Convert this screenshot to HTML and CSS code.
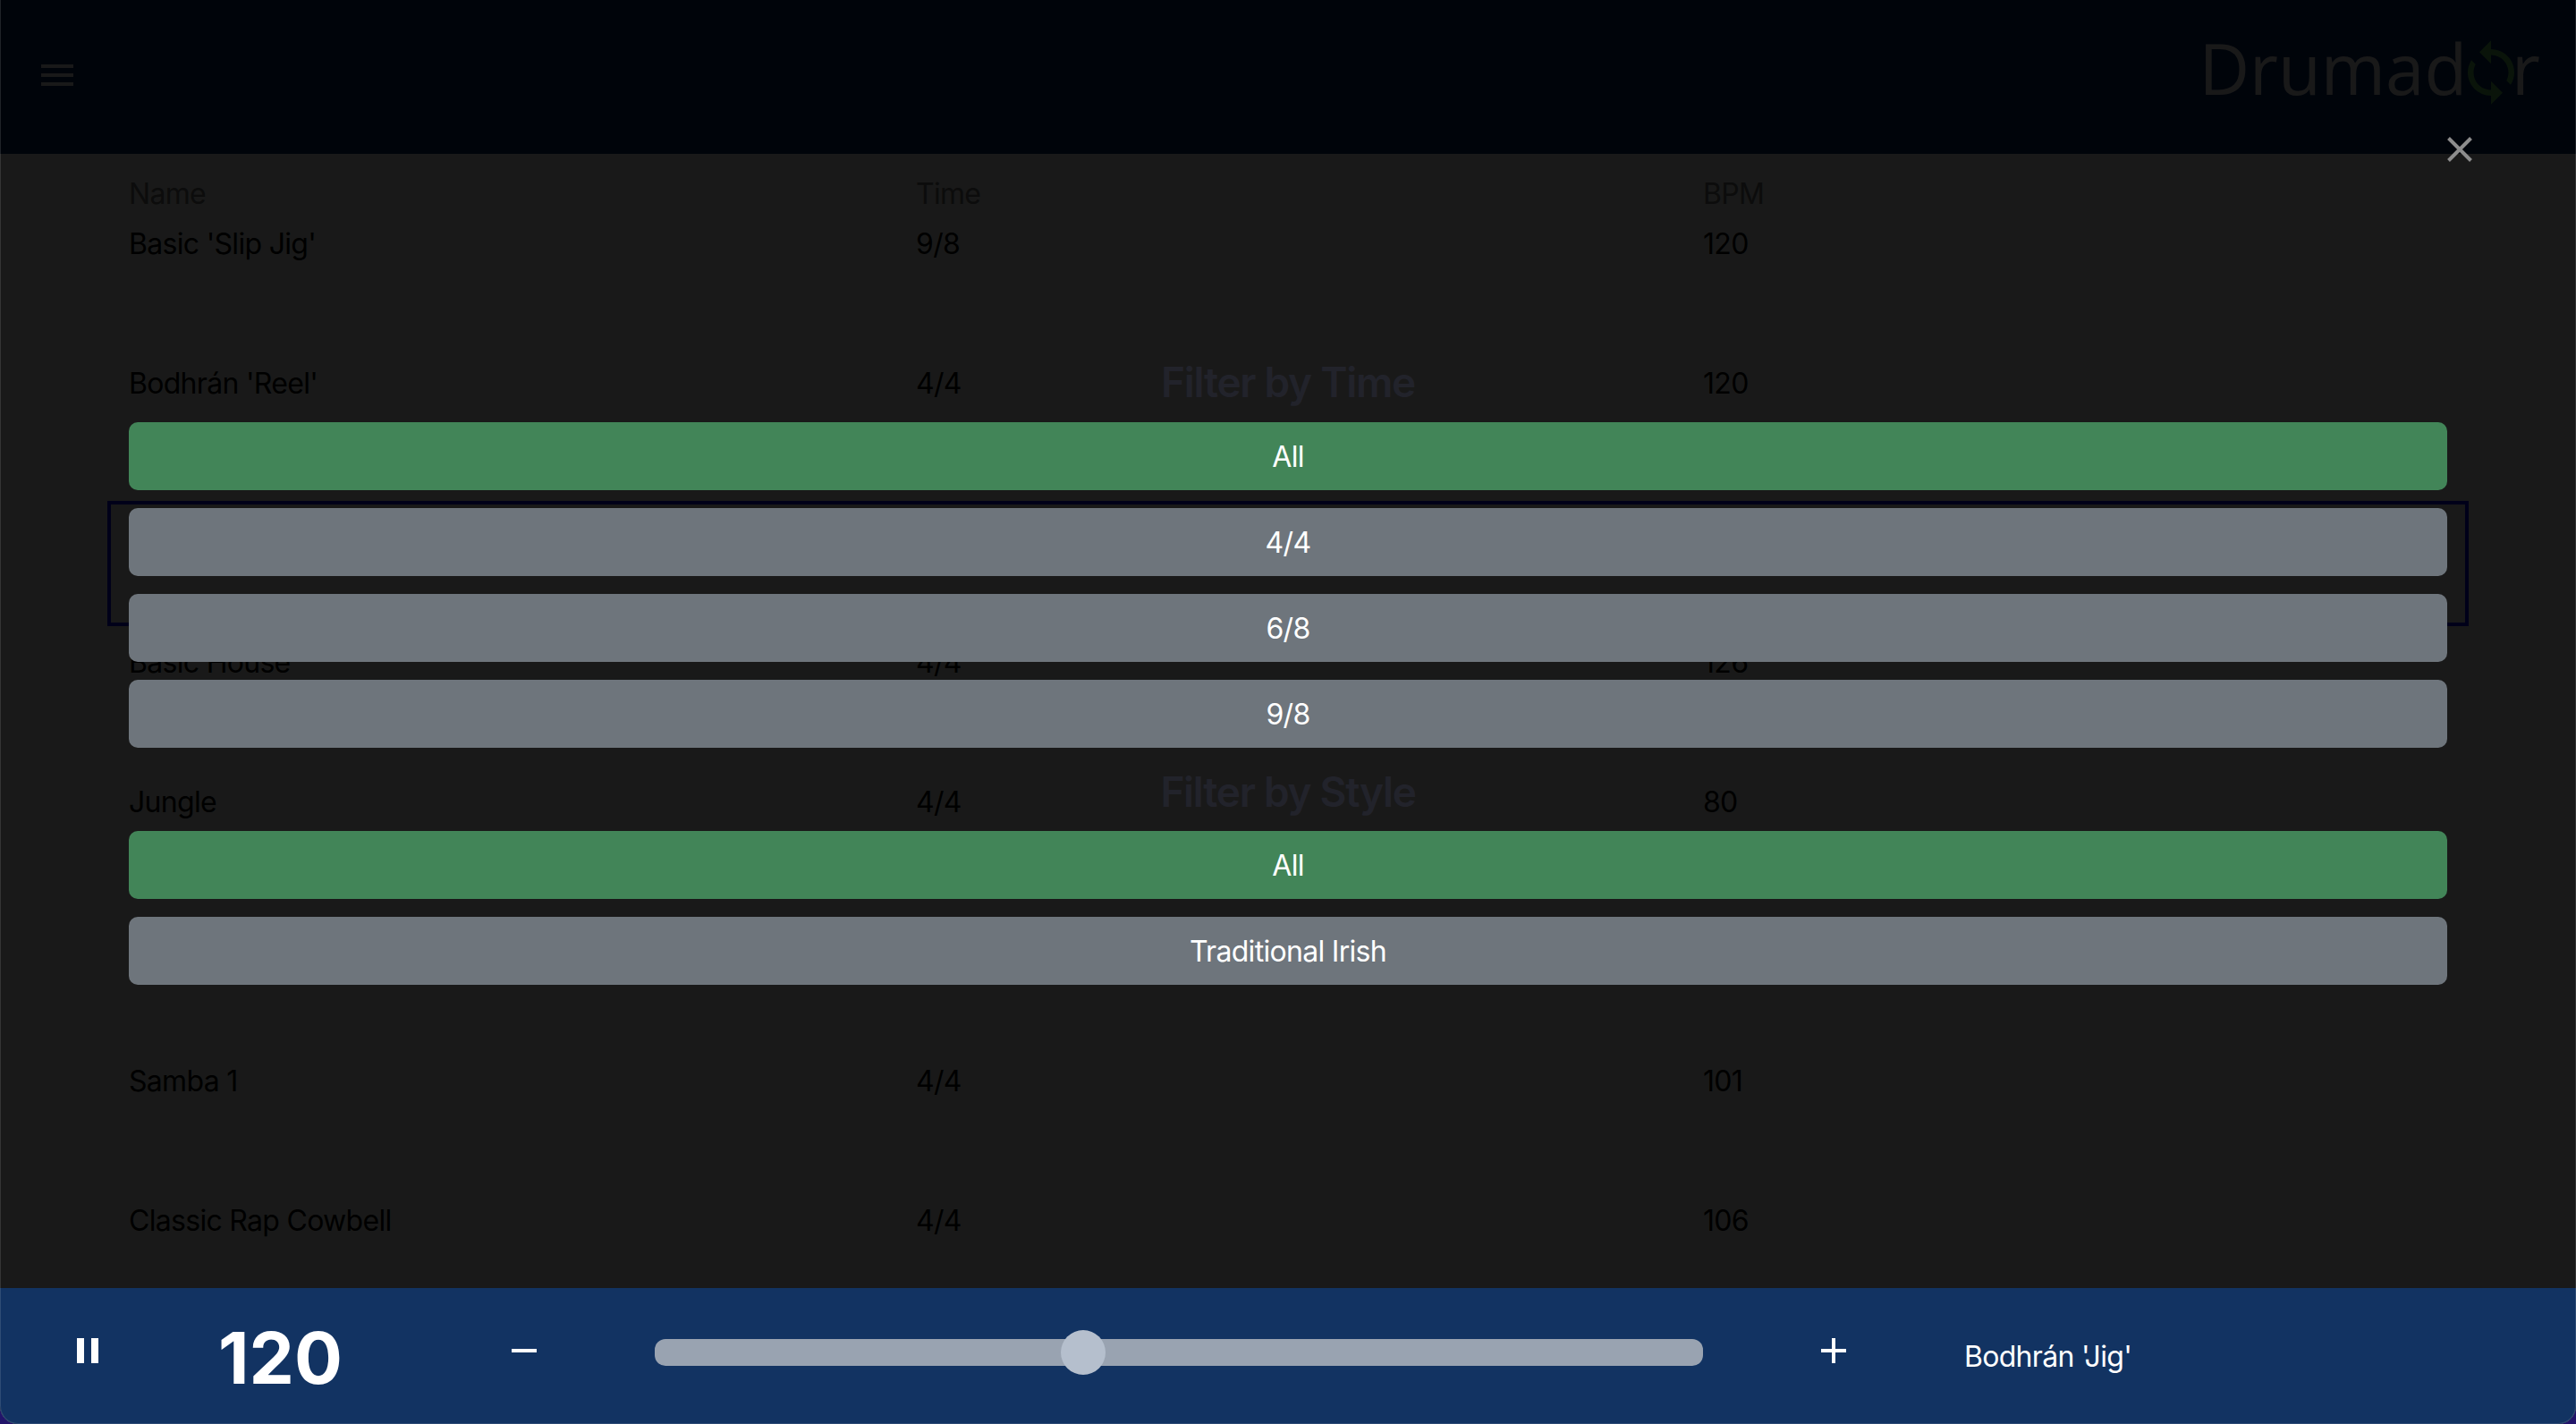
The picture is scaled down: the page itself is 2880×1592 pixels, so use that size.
FILE: index.html
```html
<!DOCTYPE html>
<html lang="en">
<head>
<meta charset="utf-8">
<title>Drumador</title>
<link rel="stylesheet" href="styles.css">
</head>
<body>
<div class="window">
  <header class="topbar">
    <button class="menu" aria-label="Menu"><span></span><span></span><span></span></button>
    <div class="logo">
      <span>Drumad</span>
      <svg class="logo-icon" viewBox="0 0 24 24"><path d="M12 4V1L8 5l4 4V6c3.31 0 6 2.69 6 6 0 1.01-.25 1.97-.7 2.8l1.46 1.46C19.54 15.03 20 13.57 20 12c0-4.42-3.58-8-8-8zm0 14c-3.31 0-6-2.69-6-6 0-1.01.25-1.97.7-2.8L5.24 7.74C4.46 8.97 4 10.43 4 12c0 4.42 3.58 8 8 8v3l4-4-4-4v3z"/></svg>
      <span>r</span>
    </div>
  </header>

  <main class="list">
    <div class="row row-head"><span>Name</span><span>Time</span><span>BPM</span></div>
    <div class="row"><span>Basic 'Slip Jig'</span><span>9/8</span><span>120</span></div>
    <div class="row"><span>Bodhrán 'Reel'</span><span>4/4</span><span>120</span></div>
    <div class="row row-active"><span>Bodhrán 'Jig'</span><span>6/8</span><span>120</span></div>
    <div class="row"><span>Basic House</span><span>4/4</span><span>126</span></div>
    <div class="row"><span>Jungle</span><span>4/4</span><span>80</span></div>
    <div class="row"><span>Basic Rock</span><span>4/4</span><span>120</span></div>
    <div class="row"><span>Samba 1</span><span>4/4</span><span>101</span></div>
    <div class="row"><span>Classic Rap Cowbell</span><span>4/4</span><span>106</span></div>
  </main>

  <div class="overlay">
    <button class="close" aria-label="Close">
      <svg viewBox="0 0 28 28"><path d="M1.5 1.5 26.5 26.5M26.5 1.5 1.5 26.5"/></svg>
    </button>
    <h2 class="filter-title">Filter by Time</h2>
    <div class="filter-group">
      <button class="pill pill-on">All</button>
      <button class="pill">4/4</button>
      <button class="pill">6/8</button>
      <button class="pill">9/8</button>
    </div>
    <h2 class="filter-title filter-title-next">Filter by Style</h2>
    <div class="filter-group">
      <button class="pill pill-on">All</button>
      <button class="pill">Traditional Irish</button>
    </div>
  </div>

  <footer class="player">
    <button class="ctl pause" aria-label="Pause"><svg viewBox="0 0 24 28"><path d="M0 0h8v28H0zM16 0h8v28h-8z"/></svg></button>
    <div class="bpm">120</div>
    <button class="ctl minus" aria-label="Slower"><svg viewBox="0 0 28 28"><path d="M0 12h28v4H0z"/></svg></button>
    <input class="tempo" type="range" min="0" max="1000" value="405" aria-label="Tempo">
    <button class="ctl plus" aria-label="Faster"><svg viewBox="0 0 28 28"><path d="M12 0h4v12h12v4H16v12h-4V16H0v-4h12z"/></svg></button>
    <div class="track">Bodhrán 'Jig'</div>
  </footer>
</div>
</body>
</html>
```
FILE: styles.css
```css
* { box-sizing: border-box; }
html, body { margin: 0; height: 100%; background: #22146a; }
body { font-family: Inter, "Liberation Sans", sans-serif; font-size: 32px; letter-spacing: -0.7px; color: #000; }
button { font: inherit; letter-spacing: inherit; border: 0; background: none; padding: 0; color: inherit; }

.window {
  position: relative;
  height: 100vh;
  display: flex;
  flex-direction: column;
  overflow: hidden;
  border-radius: 0 0 20px 20px;
  background: #f8fff8;
}
.window::after {
  content: "";
  position: absolute;
  inset: 0;
  z-index: 5;
  border: 1px solid rgba(255, 255, 255, .12);
  border-top: 0;
  border-radius: 0 0 20px 20px;
  pointer-events: none;
}

.topbar {
  flex: none;
  height: 172px;
  background: #00286a;
  display: flex;
  align-items: flex-start;
  justify-content: space-between;
  padding: 0 0 0 46px;
  color: #fff;
}
.menu { width: 36px; margin-top: 72px; display: flex; flex-direction: column; gap: 6px; }
.menu span { display: block; height: 4px; background: #fff; }
.logo {
  display: flex;
  align-items: flex-start;
  margin-top: 23px;
  padding-right: 40px;
  font-family: "Open Sans", sans-serif;
  font-size: 78px;
  line-height: 106px;
  letter-spacing: 0;
}
.logo-icon { width: 78px; height: 78px; margin: 19px -16px 0 -12px; fill: #66cc66; }

.list { flex: 1; min-height: 0; padding: 20px 120px 0; overflow: hidden; }
.row {
  display: grid;
  grid-template-columns: repeat(3, 880px);
  height: 140px;
  margin-bottom: 16px;
  padding: 1px 0 0 24px;
  line-height: 48px;
}
.row-head { height: 48px; margin-bottom: 8px; color: #777; }
.row-active { outline: 4px solid #0000ff; outline-offset: -4px; }

.overlay {
  position: absolute;
  inset: 0;
  z-index: 2;
  padding: 399px 144px 0;
  background: rgba(0, 0, 0, .9);
}
.close { position: absolute; top: 153px; left: 2736px; width: 28px; height: 28px; display: block; }
.close svg { display: block; width: 28px; height: 28px; fill: none; stroke: #8c8c8c; stroke-width: 4; }
.filter-title {
  margin: 0 0 17px;
  font-size: 46px;
  line-height: 56px;
  font-weight: 600;
  letter-spacing: -1.3px;
  text-align: center;
  color: #22232b;
}
.filter-title-next { margin: 21px 0 16px; }
.filter-group { display: flex; flex-direction: column; gap: 20px; }
.pill {
  display: block;
  width: 100%;
  height: 76px;
  padding-top: 2px;
  border-radius: 10px;
  background: #6e757c;
  color: #fff;
  font-size: 32px;
  line-height: 48px;
}
.pill-on { background: #428558; }

.player {
  position: absolute;
  left: 0;
  right: 0;
  bottom: 0;
  z-index: 3;
  height: 152px;
  background: #123362;
  display: flex;
  align-items: center;
  padding-left: 86px;
  color: #fff;
}
.ctl { flex: none; display: block; }
.ctl svg { display: block; width: 100%; height: 100%; fill: #fff; }
.pause { width: 24px; height: 28px; margin-bottom: 12px; }
.bpm { flex: none; width: 462px; margin-top: 4px; padding-left: 134px; font-size: 80px; font-weight: 700; line-height: 96px; letter-spacing: 0; white-space: nowrap; }
.minus { width: 28px; height: 28px; margin-bottom: 12px; }
.plus { width: 28px; height: 28px; margin-left: 132px; margin-bottom: 12px; }
.tempo {
  -webkit-appearance: none;
  appearance: none;
  flex: none;
  width: 1172px;
  height: 50px;
  margin: 0 0 8px 132px;
  background: transparent;
}
.tempo::-webkit-slider-runnable-track { height: 30px; border-radius: 12px; background: #99a3b1; }
.tempo::-webkit-slider-thumb {
  -webkit-appearance: none;
  appearance: none;
  width: 50px;
  height: 50px;
  margin-top: -10px;
  border-radius: 50%;
  background: #b5bfcd;
}
.track { margin-left: 132px; margin-top: 2px; line-height: 48px; white-space: nowrap; }
```
